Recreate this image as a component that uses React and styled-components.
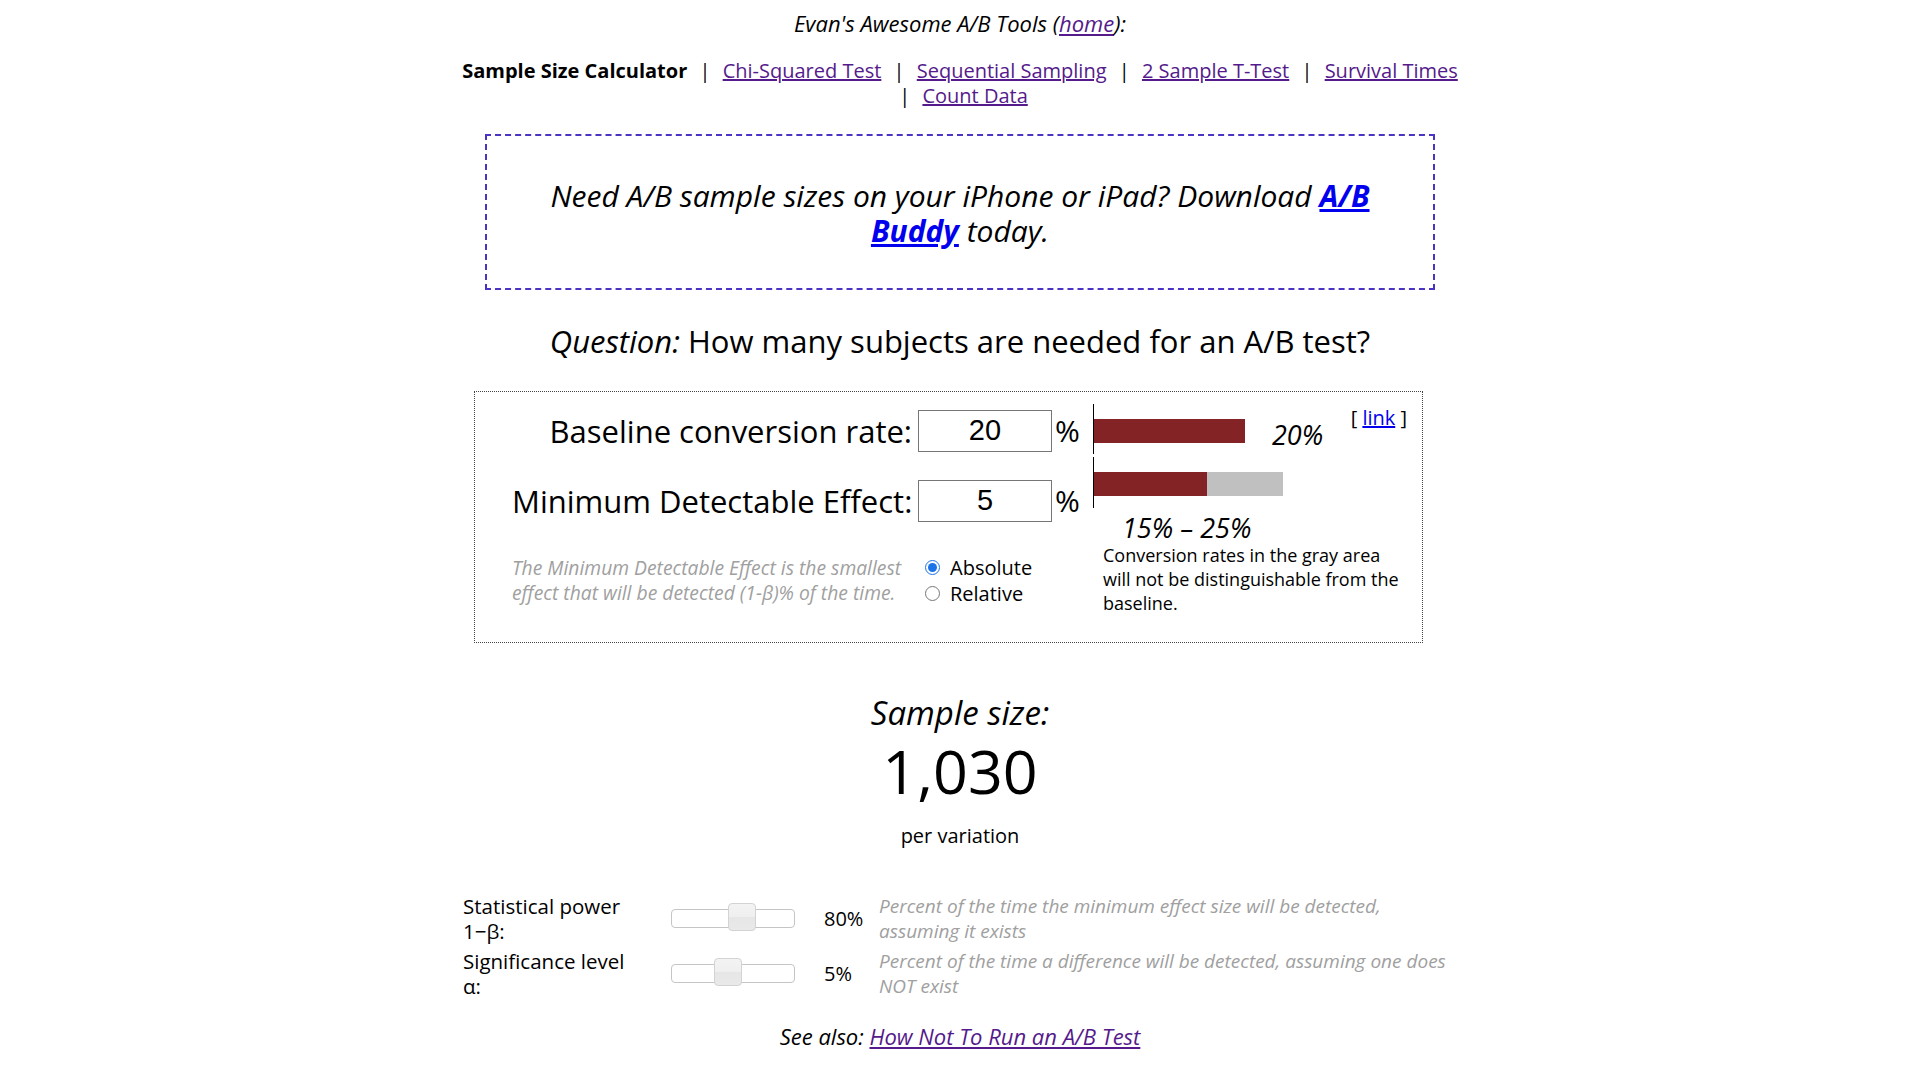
import React from 'react';
import styled, { createGlobalStyle } from 'styled-components';

const GlobalStyle = createGlobalStyle`
  body {
    margin: 0;
    background: #ffffff;
    color: #000000;
    font-family: "Open Sans", "Noto Sans", sans-serif;
    font-size: 20px;
  }
  a {
    color: #551a8b;
  }
`;

const Page = styled.div`
  width: 1000px;
  margin: 0 auto;
  padding: 10.5px 0 20px;
  text-align: center;
`;

const ToolsTitle = styled.div`
  font-style: italic;
  font-size: 22px;
  line-height: 25px;
`;

const Nav = styled.nav`
  margin-top: 22px;
  font-size: 20px;
  line-height: 25.5px;
`;

const Current = styled.b`
  font-weight: bold;
`;

const Sep = styled.span`
  margin: 0 7px;
`;

const Promo = styled.div`
  margin: 25px 25px 0;
  border: 2px dashed #4a34c4;
  padding: 42px 50px 40px;
  font-size: 30px;
  line-height: 35px;
  font-style: italic;
`;

const PromoLink = styled.a`
  color: #0000ee;
  font-weight: bold;
`;

const Question = styled.h2`
  margin: 33px 0 0;
  font-size: 31px;
  line-height: 36px;
  font-weight: normal;
`;

const Calculator = styled.div`
  display: flex;
  box-sizing: border-box;
  width: 949px;
  margin: 32px 0 0 14px;
  padding: 12px 15px 27px 37px;
  border: 1px dotted #444444;
  text-align: left;
`;

const InputsColumn = styled.div`
  flex-shrink: 0;
  width: 581px;
  padding-top: 6px;
`;

const InputRow = styled.div`
  display: flex;
  align-items: center;
  height: 42px;

  & + & {
    margin-top: 28px;
  }
`;

const FieldLabel = styled.label`
  width: 400px;
  font-size: 31px;
  line-height: 40px;
  text-align: right;
  white-space: nowrap;
`;

const NumberInput = styled.input`
  box-sizing: border-box;
  width: 134px;
  height: 42px;
  margin: 0 0 0 6px;
  padding: 0;
  border: 1px solid #767676;
  border-radius: 0;
  font-family: "Liberation Sans", Arial, sans-serif;
  font-size: 29px;
  text-align: center;
  color: #000000;
`;

const Percent = styled.span`
  margin-left: 3px;
  font-size: 30px;
  line-height: 40px;
`;

const OptionsRow = styled.div`
  display: flex;
  margin-top: 33px;
`;

const Hint = styled.p`
  width: 400px;
  margin: 0;
  font-size: 19.3px;
  line-height: 25px;
  font-style: italic;
  color: #a0a0a0;
`;

const RadioGroup = styled.div`
  display: flex;
  flex-direction: column;
  margin-left: 13px;
`;

const RadioLabel = styled.label`
  display: flex;
  align-items: center;
  font-size: 20px;
  line-height: 26px;
`;

const Radio = styled.input`
  width: 15px;
  height: 15px;
  margin: 0 10px 0 0;
  accent-color: #1a73e8;
`;

const ChartColumn = styled.div`
  display: flex;
  flex: 1;
  flex-direction: column;
`;

const ChartTop = styled.div`
  display: flex;
  justify-content: space-between;
  align-items: flex-start;
`;

const BarRow = styled.div`
  display: flex;
  align-items: flex-start;
  height: ${p => p.$h}px;
  border-left: 1px solid #000000;

  & + & {
    margin-top: 3px;
  }
`;

const BarFill = styled.div`
  height: 24px;
  margin-top: 15px;
  background: ${p => (p.$gray ? '#c0c0c0' : '#832325')};
`;

const BarValue = styled.span`
  margin: 15px 0 0 27px;
  font-size: 27px;
  line-height: 32px;
  font-style: italic;
`;

const Permalink = styled.span`
  margin-top: 1px;
  font-size: 20px;
  line-height: 25px;

  a {
    color: #0000ee;
  }
`;

const Range = styled.div`
  margin-top: 5px;
  padding-left: 29px;
  font-size: 27px;
  line-height: 30px;
  font-style: italic;
`;

const ChartNote = styled.p`
  max-width: 310px;
  margin: 0;
  padding-left: 10px;
  font-size: 18px;
  line-height: 24px;
`;

const Result = styled.div`
  margin-top: 50px;
`;

const ResultLabel = styled.div`
  font-size: 33px;
  line-height: 40px;
  font-style: italic;
`;

const ResultValue = styled.div`
  margin-top: 3px;
  font-size: 61px;
  line-height: 70px;
`;

const ResultUnit = styled.div`
  margin-top: 17px;
  font-size: 20px;
  line-height: 25px;
`;

const Settings = styled.div`
  display: grid;
  grid-template-columns: 208px 153px 55px 1fr;
  row-gap: 5px;
  align-items: center;
  margin-top: 46px;
  padding-left: 3px;
  text-align: left;
`;

const SettingLabel = styled.div`
  max-width: 180px;
  font-size: 20.5px;
  line-height: 25px;
`;

const SettingValue = styled.div`
  font-size: 20px;
  line-height: 25px;
`;

const SettingDesc = styled.div`
  font-size: 19px;
  line-height: 25px;
  font-style: italic;
  color: #a0a0a0;
`;

const SliderTrack = styled.div`
  position: relative;
  box-sizing: border-box;
  width: 124px;
  height: 19px;
  border: 1px solid #c5c5c5;
  border-radius: 4px;
  background: #ffffff;
`;

const SliderThumb = styled.span`
  position: absolute;
  top: -7px;
  box-sizing: border-box;
  width: 28px;
  height: 28px;
  border: 1px solid #d3d3d3;
  border-radius: 4px;
  background: linear-gradient(#f3f3f3 0%, #efefef 50%, #e6e6e6 50%, #e9e9e9 100%);
`;

const SeeAlso = styled.p`
  margin: 25px 0 0;
  font-size: 22px;
  line-height: 25px;
  font-style: italic;
`;

const PX_PER_PCT = 151 / 20;

function Slider({ pos }) {
  return (
    <SliderTrack>
      <SliderThumb style={{ left: Math.round(pos * 122 - 14) }} />
    </SliderTrack>
  );
}

export default function App() {
  const baseline = 20;
  const mde = 5;

  return (
    <>
      <GlobalStyle />
      <Page>
        <ToolsTitle>
          Evan's Awesome A/B Tools (<a href="#home">home</a>):
        </ToolsTitle>

        <Nav>
          <Current>Sample Size Calculator</Current> <Sep>|</Sep>{' '}
          <a href="#chi">Chi-Squared Test</a> <Sep>|</Sep>{' '}
          <a href="#seq">Sequential Sampling</a> <Sep>|</Sep>{' '}
          <a href="#ttest">2 Sample T-Test</a> <Sep>|</Sep>{' '}
          <a href="#survival">Survival Times</a> <Sep>|</Sep>{' '}
          <a href="#count">Count Data</a>
        </Nav>

        <Promo>
          Need A/B sample sizes on your iPhone or iPad? Download{' '}
          <PromoLink href="#buddy">A/B</PromoLink> <PromoLink href="#buddy">Buddy</PromoLink>{' '}
          today.
        </Promo>

        <Question>
          <i>Question:</i> How many subjects are needed for an A/B test?
        </Question>

        <Calculator>
          <InputsColumn>
            <InputRow>
              <FieldLabel>Baseline conversion rate:</FieldLabel>
              <NumberInput defaultValue={baseline} />
              <Percent>%</Percent>
            </InputRow>
            <InputRow>
              <FieldLabel>Minimum Detectable Effect:</FieldLabel>
              <NumberInput defaultValue={mde} />
              <Percent>%</Percent>
            </InputRow>
            <OptionsRow>
              <Hint>
                The Minimum Detectable Effect is the smallest effect that will be detected (1-β)% of
                the time.
              </Hint>
              <RadioGroup>
                <RadioLabel>
                  <Radio type="radio" name="mde" defaultChecked />
                  Absolute
                </RadioLabel>
                <RadioLabel>
                  <Radio type="radio" name="mde" />
                  Relative
                </RadioLabel>
              </RadioGroup>
            </OptionsRow>
          </InputsColumn>

          <ChartColumn>
            <ChartTop>
              <div>
                <BarRow $h={50}>
                  <BarFill style={{ width: baseline * PX_PER_PCT }} />
                  <BarValue>{baseline}%</BarValue>
                </BarRow>
                <BarRow $h={51}>
                  <BarFill style={{ width: (baseline - mde) * PX_PER_PCT }} />
                  <BarFill $gray style={{ width: 2 * mde * PX_PER_PCT }} />
                </BarRow>
              </div>
              <Permalink>
                [ <a href="#link">link</a> ]
              </Permalink>
            </ChartTop>
            <Range>
              {baseline - mde}% – {baseline + mde}%
            </Range>
            <ChartNote>
              Conversion rates in the gray area will not be distinguishable from the baseline.
            </ChartNote>
          </ChartColumn>
        </Calculator>

        <Result>
          <ResultLabel>Sample size:</ResultLabel>
          <ResultValue>1,030</ResultValue>
          <ResultUnit>per variation</ResultUnit>
        </Result>

        <Settings>
          <SettingLabel>Statistical power 1−β:</SettingLabel>
          <Slider pos={0.575} />
          <SettingValue>80%</SettingValue>
          <SettingDesc>
            Percent of the time the minimum effect size will be detected, assuming it exists
          </SettingDesc>

          <SettingLabel>Significance level α:</SettingLabel>
          <Slider pos={0.455} />
          <SettingValue>5%</SettingValue>
          <SettingDesc>
            Percent of the time a difference will be detected, assuming one does NOT exist
          </SettingDesc>
        </Settings>

        <SeeAlso>
          See also: <a href="#hownot">How Not To Run an A/B Test</a>
        </SeeAlso>
      </Page>
    </>
  );
}
